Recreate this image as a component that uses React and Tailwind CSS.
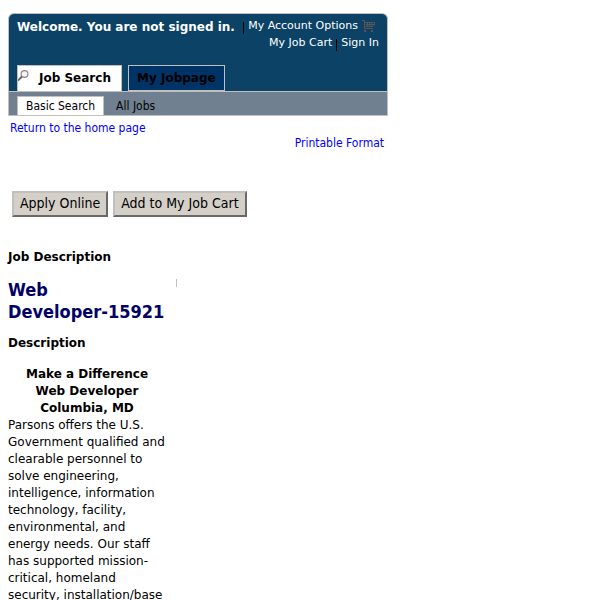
const sans = "font-['DejaVu_Sans',sans-serif]";
const condensed = "font-['DejaVu_Sans_Condensed','DejaVu_Sans',sans-serif] [font-stretch:condensed]";

function CartIcon() {
  return (
    <svg width="14" height="14" viewBox="0 0 14 14" fill="none" stroke="#5a5554" aria-hidden="true">
      <path d="M0 1.5h2.500v8h8.500M3 3.5h10M3.500 5.500h8.500M3.500 7.500h7.500M5.500 3v5M7.500 3v5M9.500 3v5M12.500 3v3l-1.500 1.500" />
      <path d="M2 12h2M9 12h2" strokeWidth="2" />
    </svg>
  );
}

function SearchIcon() {
  return (
    <svg width="12" height="12" viewBox="0 0 12 12" fill="none" aria-hidden="true">
      <circle cx="6.500" cy="4" r="3.400" fill="#f4f4f4" stroke="#8d8987" strokeWidth="1.200" />
      <path d="M4 6.500L0 10.500" stroke="#6b625d" strokeWidth="1.800" />
    </svg>
  );
}

function Header() {
  return (
    <header className="w-full max-w-[380px] overflow-hidden rounded-t-md border border-[#c0c0c0] bg-[#0b4265]">
      <div className="flex h-[51px] items-start justify-between px-2 pt-[3px]">
        <p className={`${sans} whitespace-nowrap text-[12px] font-bold leading-5 text-white`}>
          Welcome. You are not signed in.
        </p>
        <nav className={`${sans} flex flex-col items-end text-[11px] leading-[17px] text-white`}>
          <div className="flex items-center gap-1 pr-[3px]">
            <span className="mt-1 h-3 w-px bg-black" />
            <a href="#account" className="whitespace-nowrap">My Account Options</a>
            <CartIcon />
          </div>
          <div className="flex items-center gap-1">
            <a href="#cart">My Job Cart</a>
            <span className="mt-1 h-3 w-px bg-black" />
            <a href="#signin">Sign In</a>
          </div>
        </nav>
      </div>
      <nav className={`${sans} flex h-[26px] gap-[6px] px-2 text-[12px] font-bold leading-[25px] text-black`}>
        <a href="#search" className="flex w-[105px] border border-b-0 border-[#c0c0c0] bg-white">
          <span className="pt-1"><SearchIcon /></span>
          <span className="pl-[9px]">Job Search</span>
        </a>
        <a href="#jobpage" className="border border-[#c0c0c0] bg-[#003366] px-2">My Jobpage</a>
      </nav>
      <nav className={`${condensed} flex h-6 items-end border-t border-[#c0c0c0] bg-[#708090] px-2 text-[12px] leading-[18px] text-black`}>
        <a href="#basic" className="border border-b-0 border-[#c0c0c0] bg-white px-2">Basic Search</a>
        <a href="#all" className="px-3">All Jobs</a>
      </nav>
    </header>
  );
}

function ActionButton({ children }) {
  return (
    <button type="button" className="border-2 border-b-[#696969] border-l-[#c0c0c0] border-r-[#696969] border-t-[#c0c0c0] bg-[#d4d0c8] px-[6px] pb-[2px] text-black">
      {children}
    </button>
  );
}

export default function App() {
  return (
    <div className="min-h-screen bg-white px-2 pt-[13px] text-black">
      <Header />
      <div className={`${condensed} flex w-full max-w-[380px] flex-col px-[2px] pt-[5px] text-[12px] leading-[15px] text-[#0000ff]`}>
        <a href="#home" className="self-start">Return to the home page</a>
        <a href="#print" className="self-end pr-[2px]">Printable Format</a>
      </div>
      <div className={`${condensed} flex gap-[5px] px-1 pt-10 text-[14px] leading-5`}>
        <ActionButton>Apply Online</ActionButton>
        <ActionButton>Add to My Job Cart</ActionButton>
      </div>
      <main className={`${sans} pt-8 text-[12px] leading-[17px]`}>
        <h1 className="font-bold">Job Description</h1>
        <div className="flex gap-[10px] pt-[13px]">
          <article className="w-[158px]">
            <h2 className={`${condensed} text-[18px] font-bold leading-[22px] text-[#000066]`}>
              Web <span className="whitespace-nowrap">Developer-15921</span>
            </h2>
            <h3 className="pt-3 font-bold">Description</h3>
            <p className="pt-[14px] text-center font-bold">
              Make a Difference<br />Web Developer<br />Columbia, MD
            </p>
            <p>
              Parsons offers the U.S. Government qualified and clearable personnel to solve
              engineering, intelligence, information technology, facility, environmental, and
              energy needs. Our staff has supported mission-critical, homeland security,
              installation/base
            </p>
          </article>
          <span className="h-2 w-px bg-[#c0c0c0]" />
        </div>
      </main>
    </div>
  );
}
